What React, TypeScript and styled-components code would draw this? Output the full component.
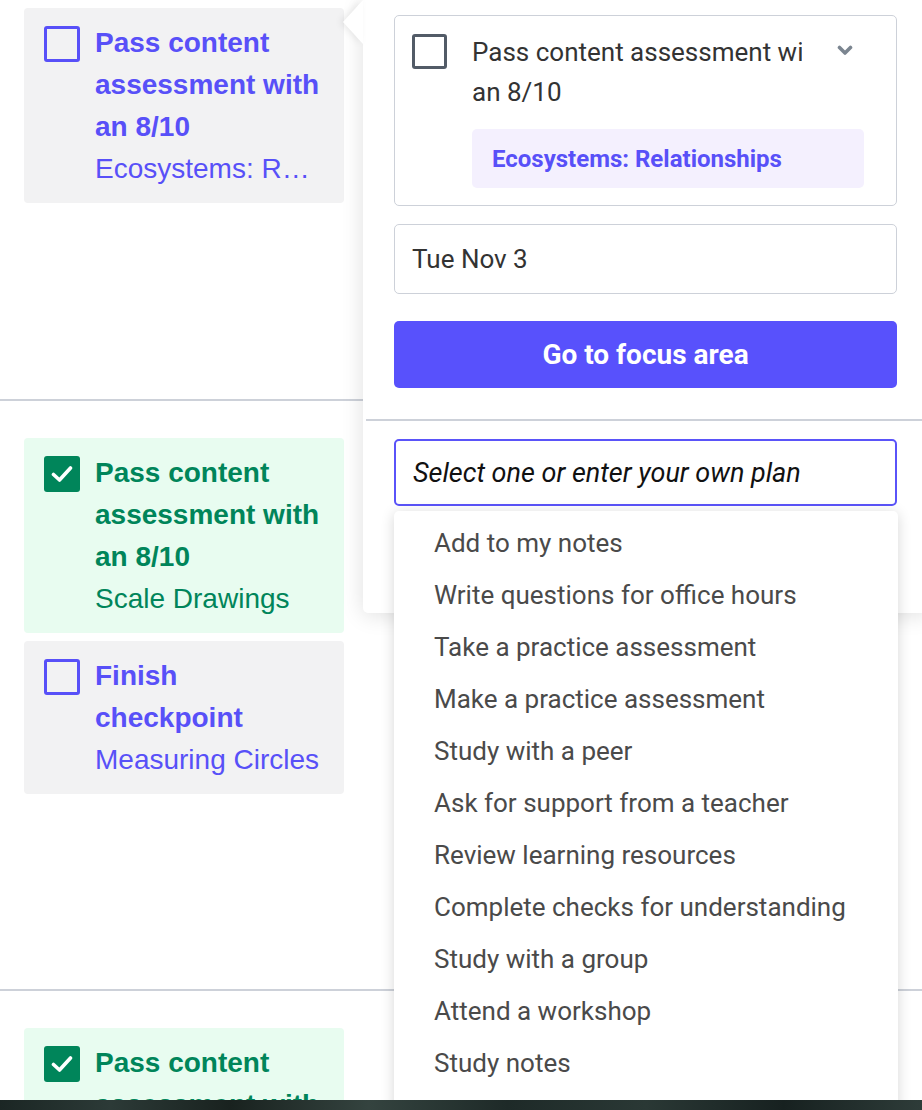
import React from "react"
import styled, { createGlobalStyle } from "styled-components"

type Goal = { title: string; area: string; done: boolean }

const days: { padTop: number; height: number; goals: Goal[] }[] = [
  {
    padTop: 8,
    height: 401,
    goals: [{ title: "Pass content assessment with an 8/10", area: "Ecosystems: Relationships", done: false }],
  },
  {
    padTop: 37,
    height: 590,
    goals: [
      { title: "Pass content assessment with an 8/10", area: "Scale Drawings", done: true },
      { title: "Finish checkpoint", area: "Measuring Circles", done: false },
    ],
  },
  {
    padTop: 37,
    height: 400,
    goals: [{ title: "Pass content assessment with an 8/10", area: "Proportional Relationships", done: true }],
  },
]

const plans = [
  "Add to my notes",
  "Write questions for office hours",
  "Take a practice assessment",
  "Make a practice assessment",
  "Study with a peer",
  "Ask for support from a teacher",
  "Review learning resources",
  "Complete checks for understanding",
  "Study with a group",
  "Attend a workshop",
  "Study notes",
]

const CheckMark = () => (
  <svg width="22" height="18" viewBox="0 0 22 18" fill="none">
    <path d="M2.5 9.5 L8.5 15 L19.5 3" stroke="#fff" strokeWidth="3.6" strokeLinecap="round" strokeLinejoin="round" />
  </svg>
)

const Chevron = () => (
  <svg width="16" height="11" viewBox="0 0 16 11" fill="none">
    <path d="M2.5 2.5 L8 8 L13.5 2.5" stroke="#7b8590" strokeWidth="3.6" strokeLinecap="round" strokeLinejoin="round" />
  </svg>
)

export default function App() {
  return (
    <>
      <GlobalStyle />
      <Page>
        {days.map((day, i) => (
          <DaySection key={i} $padTop={day.padTop} $height={day.height}>
            <GoalColumn>
              {day.goals.map(goal => (
                <GoalCard key={goal.area} $done={goal.done}>
                  <GoalBox $done={goal.done}>{goal.done && <CheckMark />}</GoalBox>
                  <GoalText>
                    <GoalTitle>{goal.title}</GoalTitle>
                    <GoalArea>{goal.area}</GoalArea>
                  </GoalText>
                </GoalCard>
              ))}
            </GoalColumn>
          </DaySection>
        ))}

        <Popover>
          <TaskBox>
            <TaskCheck />
            <TaskBody>
              <TaskHeader>
                <TaskTitleClip>
                  <TaskTitle>Pass content assessment with an 8/10</TaskTitle>
                </TaskTitleClip>
                <ChevronButton>
                  <Chevron />
                </ChevronButton>
              </TaskHeader>
              <AreaTag>Ecosystems: Relationships</AreaTag>
            </TaskBody>
          </TaskBox>

          <DateField>Tue Nov 3</DateField>

          <FocusButton>Go to focus area</FocusButton>

          <PopoverDivider />

          <PlanField>
            <PlanInput>Select one or enter your own plan</PlanInput>
            <PlanMenu>
              {plans.map(p => (
                <PlanOption key={p}>{p}</PlanOption>
              ))}
            </PlanMenu>
          </PlanField>
        </Popover>
      </Page>
      <Backdrop />
    </>
  )
}

const GlobalStyle = createGlobalStyle`
  html, body {
    margin: 0;
    padding: 0;
    background: #ffffff;
    overflow: hidden;
  }
  * {
    box-sizing: border-box;
  }
`

const Page = styled.div`
  position: relative;
  width: 922px;
  height: 1100px;
  overflow: hidden;
  background: #ffffff;
  font-family: "Liberation Sans", Arial, sans-serif;
`

const DaySection = styled.section<{ $padTop: number; $height: number }>`
  height: ${p => p.$height}px;
  padding: ${p => p.$padTop}px 0 0 24px;
  border-bottom: 2px solid #cdd1d9;
`

const GoalColumn = styled.div`
  width: 320px;
  display: flex;
  flex-direction: column;
  gap: 8px;
`

const GoalCard = styled.div<{ $done: boolean }>`
  display: flex;
  align-items: flex-start;
  gap: 15px;
  padding: 14px 20px 13px 20px;
  border-radius: 4px;
  background: ${p => (p.$done ? "#e8fcf0" : "#f2f2f3")};
  color: ${p => (p.$done ? "#00855a" : "#5850f8")};
`

const GoalBox = styled.span<{ $done: boolean }>`
  flex: 0 0 36px;
  width: 36px;
  height: 36px;
  margin-top: 4px;
  border-radius: 3px;
  display: flex;
  align-items: center;
  justify-content: center;
  border: ${p => (p.$done ? "none" : "3.5px solid #5850f8")};
  background: ${p => (p.$done ? "#00855a" : "transparent")};
`

const GoalText = styled.div`
  min-width: 0;
  flex: 1;
  font-size: 28px;
  line-height: 42px;
`

const GoalTitle = styled.div`
  font-weight: 700;
`

const GoalArea = styled.div`
  white-space: nowrap;
  overflow: hidden;
  text-overflow: ellipsis;
`

const Popover = styled.div`
  position: absolute;
  top: 0;
  left: 363px;
  width: 566px;
  padding: 15px 32px 107px 31px;
  background: #ffffff;
  border-radius: 0 0 5px 5px;
  box-shadow: 0 2px 22px rgba(0, 0, 0, 0.13);
  display: flex;
  flex-direction: column;
  font-family: Roboto, "Liberation Sans", sans-serif;
  z-index: 5;

  &::before {
    content: "";
    position: absolute;
    left: -20px;
    top: 0;
    border-top: 22px solid transparent;
    border-bottom: 22px solid transparent;
    border-right: 20px solid #ffffff;
    filter: drop-shadow(-3px 0 3px rgba(0, 0, 0, 0.08));
  }
`

const TaskBox = styled.div`
  display: flex;
  align-items: flex-start;
  gap: 25px;
  padding: 16px 32px 17px 17px;
  border: 1.5px solid #cdd1d9;
  border-radius: 5px;
`

const TaskCheck = styled.span`
  flex: 0 0 35px;
  height: 35px;
  margin-top: 2px;
  border: 3.5px solid #525b67;
  border-radius: 3px;
`

const TaskBody = styled.div`
  flex: 1;
  min-width: 0;
`

const TaskHeader = styled.div`
  display: flex;
  align-items: flex-start;
`

const TaskTitleClip = styled.div`
  flex: 0 0 330px;
  overflow: hidden;
`

const TaskTitle = styled.div`
  width: 370px;
  font-size: 26px;
  line-height: 40px;
  color: #333333;
`

const ChevronButton = styled.span`
  margin: 13px 0 0 35px;
  display: flex;
`

const AreaTag = styled.div`
  margin-top: 17px;
  height: 59px;
  padding: 0 20px;
  display: flex;
  align-items: center;
  border-radius: 5px;
  background: #f4f0fe;
  color: #5850f8;
  font-size: 24px;
  font-weight: 700;
`

const DateField = styled.div`
  margin-top: 18px;
  height: 70px;
  padding: 0 17px;
  display: flex;
  align-items: center;
  border: 1.5px solid #cdd1d9;
  border-radius: 5px;
  font-size: 26px;
  color: #333333;
`

const FocusButton = styled.button`
  margin-top: 27px;
  height: 67px;
  border: none;
  border-radius: 5px;
  background: #5851fc;
  color: #ffffff;
  font-family: Roboto, "Liberation Sans", sans-serif;
  font-size: 28px;
  font-weight: 700;
`

const PopoverDivider = styled.hr`
  margin: 31px -40px 0 -28px;
  border: none;
  border-top: 2px solid #cdd1d9;
`

const PlanField = styled.div`
  position: relative;
  margin-top: 18px;
`

const PlanInput = styled.div`
  height: 67px;
  padding: 0 17px;
  display: flex;
  align-items: center;
  border: 2px solid #5a53f9;
  border-radius: 5px;
  font-size: 27px;
  font-style: italic;
  color: #111111;
`

const PlanMenu = styled.ul`
  position: absolute;
  top: calc(100% + 5px);
  left: 0;
  right: -1px;
  margin: 0;
  padding: 6px 0 30px;
  list-style: none;
  background: #ffffff;
  border-radius: 5px;
  box-shadow: 0 2px 14px rgba(0, 0, 0, 0.16);
  z-index: 6;
`

const PlanOption = styled.li`
  height: 52px;
  line-height: 52px;
  padding: 0 40px;
  font-size: 26px;
  color: #4a4a4a;
  white-space: nowrap;
`

const Backdrop = styled.div`
  height: 10px;
  background: linear-gradient(
    90deg,
    #1b2624 0%,
    #2c3a37 12%,
    #19221f 25%,
    #34433f 40%,
    #1e2a28 55%,
    #2a3835 70%,
    #172120 85%,
    #2e3c39 100%
  );
`
